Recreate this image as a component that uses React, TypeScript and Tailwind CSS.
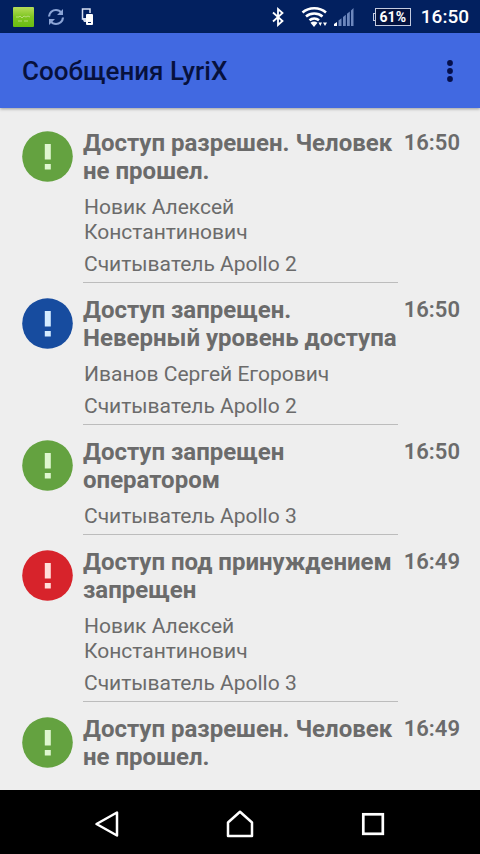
type Tone = "green" | "blue" | "red";

type Message = {
  id: number;
  tone: Tone;
  title: string;
  time: string;
  person?: string;
  reader?: string;
};

const messages: Message[] = [
  { id: 1, tone: "green", title: "Доступ разрешен. Человек не прошел.", time: "16:50", person: "Новик Алексей Константинович", reader: "Считыватель Apollo 2" },
  { id: 2, tone: "blue", title: "Доступ запрещен. Неверный уровень доступа", time: "16:50", person: "Иванов Сергей Егорович", reader: "Считыватель Apollo 2" },
  { id: 3, tone: "green", title: "Доступ запрещен оператором", time: "16:50", reader: "Считыватель Apollo 3" },
  { id: 4, tone: "red", title: "Доступ под принуждением запрещен", time: "16:49", person: "Новик Алексей Константинович", reader: "Считыватель Apollo 3" },
  { id: 5, tone: "green", title: "Доступ разрешен. Человек не прошел.", time: "16:49" },
];

const toneColors: Record<Tone, { disc: string; mark: string }> = {
  green: { disc: "#64a240", mark: "#dff6d0" },
  blue: { disc: "#174c9f", mark: "#d5ecff" },
  red: { disc: "#d7232b", mark: "#ffdfda" },
};

function StatusBar() {
  return (
    <div className="flex h-[33px] shrink-0 items-center justify-between bg-[#02205f] pr-[11px] pl-3 text-white">
      <div className="flex items-center">
        {/* Notification picture */}
        <svg width="23" height="22" viewBox="0 0 23 22" aria-hidden>
          <defs>
            <linearGradient id="noteGrad" x1="0" y1="0" x2="0" y2="1">
              <stop offset="0" stopColor="#b5dc5a" />
              <stop offset="0.5" stopColor="#7fc621" />
              <stop offset="1" stopColor="#69bd12" />
            </linearGradient>
          </defs>
          <rect x="1" y="1" width="21" height="20" rx="1" fill="url(#noteGrad)" />
          <path d="M4 11h3l1-1 2 2 2-2 2 1 2-1 2 1M6 15h4m2 0h4" fill="none" stroke="#b6dc78" strokeWidth="1" />
        </svg>
        {/* Sync */}
        <svg className="ml-3" width="18" height="18" viewBox="0 0 18 18" fill="none" stroke="#8ba4d6" strokeWidth="2.2" aria-hidden>
          <path d="M2 8.500C2.300 4.500 5.500 2 9 2c2.300 0 4 .9 5.300 2.600" />
          <path d="M16 9.500C15.700 13.500 12.500 16 9 16c-2.300 0-4-.9-5.300-2.600" />
          <path d="M16 1v6h-6zM2 17v-6h6z" fill="#8ba4d6" stroke="none" />
        </svg>
        {/* Connected devices */}
        <svg className="ml-4" width="13" height="18" viewBox="0 0 13 18" aria-hidden>
          <path d="M3 11H1.500V1H9v4" fill="none" stroke="#d8e0f2" strokeWidth="1.5" />
          <rect x="5" y="6" width="7" height="11" rx="1" fill="#fff" />
          <path d="M1 10h4v4H3z" fill="#d8e0f2" />
          <rect x="7" y="14" width="3" height="1" fill="#02205f" />
        </svg>
      </div>

      <div className="flex items-center">
        <svg width="14" height="20" viewBox="0 0 14 20" fill="none" stroke="#fff" strokeWidth="1.8" aria-hidden>
          <path d="M2 5.500l9.500 8.500L7 18V2l4.500 4L2 14.500" />
        </svg>
        <svg className="ml-4" width="28" height="22" viewBox="0 0 28 22" fill="none" stroke="#fff" strokeWidth="2.600" aria-hidden>
          <path d="M1.500 6.500C8 .8 18.500 .8 25 6.500" />
          <path d="M5 10.500c4.600-4 11.900-4 16.500 0" />
          <path d="M8.500 14.300c2.700-2.300 6.800-2.300 9.500 0" />
          <path d="M9.500 16.800c2-1.600 5-1.600 7 0l-3.500 4.200z" fill="#fff" stroke="none" />
          <path d="M17.500 16.500h3.500l-1.700 3.500zM22 16.500h4l-2 3.500z" fill="#fff" stroke="none" />
        </svg>
        <svg className="ml-1" width="22" height="20" viewBox="0 0 22 20" aria-hidden>
          <path d="M1 19v-2l3-2v4z" fill="#fff" />
          <path d="M5.500 19v-5.500l3-2.300V19zM10 19v-9l2.800-2.300V19zM14 19V6.700l2.800-2.200V19zM18 19V3.500L20.500 1v18z" fill="#6d87bd" />
        </svg>
        <div className="relative ml-5 flex h-[18px] w-9 items-center justify-center border border-[#c3cbe0] bg-[#04133f] font-[Roboto,sans-serif] text-[14px] leading-none font-bold">
          <span className="absolute -left-[3px] h-2 w-[3px] border border-r-0 border-[#c3cbe0]" />
          61%
        </div>
        <span className="ml-2.5 text-[19px] leading-6 font-medium">16:50</span>
      </div>
    </div>
  );
}

function AlertBadge({ tone }: { tone: Tone }) {
  const { disc, mark } = toneColors[tone];
  return (
    <svg className="mt-0.5 shrink-0" width="51" height="51" viewBox="0 0 51 51" aria-hidden>
      <circle cx="25.500" cy="25.500" r="25.300" fill={disc} />
      <path d="M22.800 13h6v15.500h-6zM22.800 33h6v5.500h-6z" fill={mark} />
    </svg>
  );
}

function MessageRow({ message }: { message: Message }) {
  const { tone, title, time, person, reader } = message;
  return (
    <li className="flex pr-5 pb-[13px] pl-[22px]">
      <AlertBadge tone={tone} />
      <div className={`ml-2.5 min-w-0 flex-1 ${reader ? "border-b border-[#bcbcbc] pb-[5px]" : ""}`}>
        <h2 className="text-[24px] leading-7 font-bold">{title}</h2>
        {person && <p className="mt-2.5 pl-px text-[21px] leading-[25px]">{person}</p>}
        {reader && (
          <p className={`pl-px text-[21px] leading-[25px] ${person ? "mt-[7px]" : "mt-2.5"}`}>{reader}</p>
        )}
      </div>
      <time className="ml-1.5 text-[22px] leading-7 font-semibold">{time}</time>
    </li>
  );
}

function NavBar() {
  return (
    <nav className="flex h-16 shrink-0 items-center justify-center gap-[93px] bg-black pt-1 text-white">
      <button type="button" aria-label="Назад" className="flex w-10 justify-center">
        <svg width="28" height="28" viewBox="0 0 28 28" fill="none" stroke="currentColor" strokeWidth="2.500" strokeLinejoin="round">
          <path d="M24 2.500v23L3.500 14z" />
        </svg>
      </button>
      <button type="button" aria-label="Домой" className="flex w-10 justify-center">
        <svg width="28" height="28" viewBox="0 0 28 28" fill="none" stroke="currentColor" strokeWidth="2.500" strokeLinejoin="round">
          <path d="M2 12.500L14 1.800l12 10.700V26H2z" />
        </svg>
      </button>
      <button type="button" aria-label="Недавние" className="flex w-10 justify-center">
        <svg width="28" height="28" viewBox="0 0 28 28" fill="none" stroke="currentColor" strokeWidth="2.700">
          <rect x="4.300" y="4.300" width="19.500" height="19.500" />
        </svg>
      </button>
    </nav>
  );
}

export default function App() {
  return (
    <div className="flex h-screen flex-col bg-[#eeeeee] font-[Roboto,sans-serif] text-[#6b6b6b]">
      <StatusBar />
      <header className="relative flex h-[75px] shrink-0 items-center justify-between bg-[#4169e1] pr-4 pl-[22px] text-[#07113d] shadow-[0_1px_3px_rgba(0,0,0,0.35)]">
        <h1 className="text-[26px] leading-8 font-medium">Сообщения LyriX</h1>
        <button type="button" aria-label="Меню" className="flex h-10 w-7 items-center justify-center">
          <svg width="6" height="22" viewBox="0 0 6 22" fill="#050f4a">
            <circle cx="3" cy="3" r="2.900" />
            <circle cx="3" cy="11" r="2.900" />
            <circle cx="3" cy="19" r="2.900" />
          </svg>
        </button>
      </header>
      <main className="min-h-0 flex-1 overflow-y-auto pt-[21px]">
        <ul>
          {messages.map((m) => (
            <MessageRow key={m.id} message={m} />
          ))}
        </ul>
      </main>
      <NavBar />
    </div>
  );
}
